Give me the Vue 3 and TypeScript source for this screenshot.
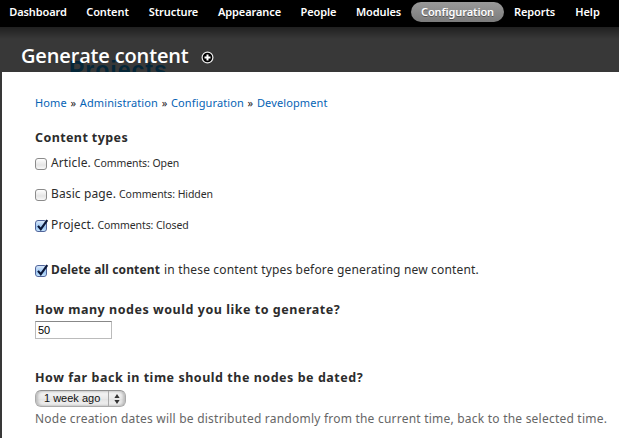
<script setup lang="ts">
import { ref } from 'vue'

interface MenuItem { label: string; active?: boolean }
interface ContentType { name: string; comments: string; checked: boolean }

const menu: MenuItem[] = [
  { label: 'Dashboard' },
  { label: 'Content' },
  { label: 'Structure' },
  { label: 'Appearance' },
  { label: 'People' },
  { label: 'Modules' },
  { label: 'Configuration', active: true },
  { label: 'Reports' },
  { label: 'Help' },
]
const crumbs: string[] = ['Home', 'Administration', 'Configuration', 'Development']
const types = ref<ContentType[]>([
  { name: 'Article.', comments: 'Comments: Open', checked: false },
  { name: 'Basic page.', comments: 'Comments: Hidden', checked: false },
  { name: 'Project.', comments: 'Comments: Closed', checked: true },
])
const deleteAll = ref(true)
const count = ref('50')
</script>

<template>
  <div class="page">
    <nav class="toolbar">
      <a v-for="m in menu" :key="m.label" class="tab" :class="{ active: m.active }"><span>{{ m.label }}</span></a>
    </nav>
    <header class="titlebar">
      <span class="ghost">Projects</span>
      <h1>Generate content</h1>
      <svg class="add" width="13" height="13" viewBox="0 0 13 13">
        <circle cx="6.5" cy="6.5" r="5.4" fill="#000" stroke="#eee" stroke-width="1.2" />
        <path d="M6.5 3.5V9.5M3.5 6.5H9.5" stroke="#fff" stroke-width="2" />
      </svg>
    </header>
    <main class="sheet">
      <div class="crumbs">
        <template v-for="(c, i) in crumbs" :key="c"><i v-if="i">»</i><a>{{ c }}</a></template>
      </div>
      <h2 class="heading types-heading">Content types</h2>
      <label v-for="t in types" :key="t.name" class="option">
        <input v-model="t.checked" type="checkbox" class="native">
        <span class="box" :class="{ on: t.checked }">
          <svg v-if="t.checked" width="14" height="14" viewBox="0 0 14 14"><path d="M3 6.8L5.8 10.2L12.3 1.2" /></svg>
        </span>
        <span class="name">{{ t.name }}</span>
        <span class="note">{{ t.comments }}</span>
      </label>
      <label class="option delete">
        <input v-model="deleteAll" type="checkbox" class="native">
        <span class="box" :class="{ on: deleteAll }">
          <svg v-if="deleteAll" width="14" height="14" viewBox="0 0 14 14"><path d="M3 6.8L5.8 10.2L12.3 1.2" /></svg>
        </span>
        <b>Delete all content</b>
        <span class="rest">in these content types before generating new content.</span>
      </label>
      <h2 class="heading count-heading">How many nodes would you like to generate?</h2>
      <input v-model="count" class="field" type="text">
      <h2 class="heading age-heading">How far back in time should the nodes be dated?</h2>
      <div class="select">
        <span class="value">1 week ago</span>
        <span class="arrows"><svg width="6" height="10" viewBox="0 0 6 10"><path d="M0.4 4L3 0L5.6 4ZM0.4 6L3 10L5.6 6Z" fill="#333" /></svg></span>
      </div>
      <p class="help">Node creation dates will be distributed randomly from the current time, back to the selected time.</p>
    </main>
  </div>
</template>

<style>
body { margin: 0; overflow: hidden; background: #383838; }
</style>

<style scoped>
.page { width: 619px; height: 438px; display: flex; flex-direction: column; background: #383838; font-family: "Noto Sans", "Open Sans", sans-serif; color: #2c2c2c; overflow: hidden; }
.toolbar { box-sizing: border-box; height: 27px; flex: none; background: #000; padding-top: 2px; display: grid; grid-template-columns: 76px 63px 69px 83px 55px 65px 93px 61px 45px; justify-content: start; }
.tab { height: 20px; line-height: 20px; text-align: center; color: #fff; font-size: 11px; font-weight: 600; letter-spacing: -0.1px; white-space: nowrap; border-radius: 10px; }
.tab.active { background: linear-gradient(#999, #7b7b7b); text-shadow: 0 1px 0 #555; }
.titlebar { position: relative; box-sizing: border-box; height: 45px; flex: none; display: flex; align-items: flex-start; padding-left: 21px; background: linear-gradient(#202020, #383838 12px); overflow: hidden; }
.ghost { position: absolute; left: 69px; top: 30px; font: bold 23px/26px "Liberation Sans", sans-serif; color: #052638; letter-spacing: 1px; }
h1 { position: relative; margin: 14px 0 0; font-family: "Open Sans", sans-serif; font-size: 20px; line-height: 29px; font-weight: 600; color: #fff; letter-spacing: -0.15px; white-space: nowrap; width: 180px; }
.add { margin-top: 24px; }
.sheet { flex: 1; margin-left: 2px; background: #fff; padding-left: 33px; display: flex; flex-direction: column; align-items: flex-start; white-space: nowrap; }
.crumbs { margin-top: 23px; height: 16px; line-height: 16px; font-size: 11px; letter-spacing: 0.12px; display: flex; color: #0563b5; }
.crumbs i { font-style: normal; color: #222; width: 13px; text-align: center; }
.heading { margin: 0; font-size: 12.5px; line-height: 18px; font-weight: 700; letter-spacing: 0.53px; color: #2c2c2c; }
.types-heading { margin-top: 18px; margin-bottom: 6px; letter-spacing: 0.4px; }
.option { display: flex; align-items: flex-start; height: 20px; line-height: 20px; margin-bottom: 11px; font-size: 12px; }
.native { appearance: none; width: 0; height: 0; margin: 0; }
.box { box-sizing: border-box; width: 12px; height: 12px; margin: 5px 4px 0 0; border: 1px solid #8b8b8b; border-radius: 3px; background: linear-gradient(#fff, #e5e5e5 60%, #f8f8f8); }
.box.on { border-color: #51659b; background: linear-gradient(#d8e8fa, #9cc5f1 60%, #c4e4ff); }
.box svg { display: block; margin: -2px 0 0 -1px; overflow: visible; }
.box path { fill: none; stroke: #0a1738; stroke-width: 2.1; }
.name { letter-spacing: 0.12px; margin-right: 3px; }
.note { font-size: 10.5px; letter-spacing: -0.08px; }
.delete { margin-top: 14px; margin-bottom: 0; }
.delete b { letter-spacing: 0.14px; }
.rest { margin-left: 4px; letter-spacing: 0.17px; }
.count-heading { margin-top: 21px; }
.field { box-sizing: border-box; width: 77px; height: 18px; margin: 2px 0 0; padding: 0 2px; border: 1px solid #bbb; border-top-color: #888; border-radius: 0; font: 11px/16px "Liberation Sans", sans-serif; color: #000; background: #fff; outline: 0; }
.age-heading { margin-top: 30px; }
.select { box-sizing: border-box; width: 91px; height: 17px; margin-top: 3px; border: 1px solid #aaa; border-top-color: #8f8f8f; border-radius: 6px; display: flex; background: linear-gradient(#f8f8f8, #e9e9e9 50%, #e2e2e2 52%, #f5f5f5); box-shadow: inset 2px 0 3px #bbb, inset -2px 0 3px #bbb; font: 11px/15px "Liberation Sans", sans-serif; color: #111; }
.value { width: 73px; padding-left: 8px; box-sizing: border-box; border-right: 1px solid #aaa; }
.arrows { flex: 1; display: flex; align-items: center; justify-content: center; }
.help { margin: 3px 0 0; font-size: 12px; line-height: 18px; letter-spacing: 0.22px; color: #666; }
</style>
